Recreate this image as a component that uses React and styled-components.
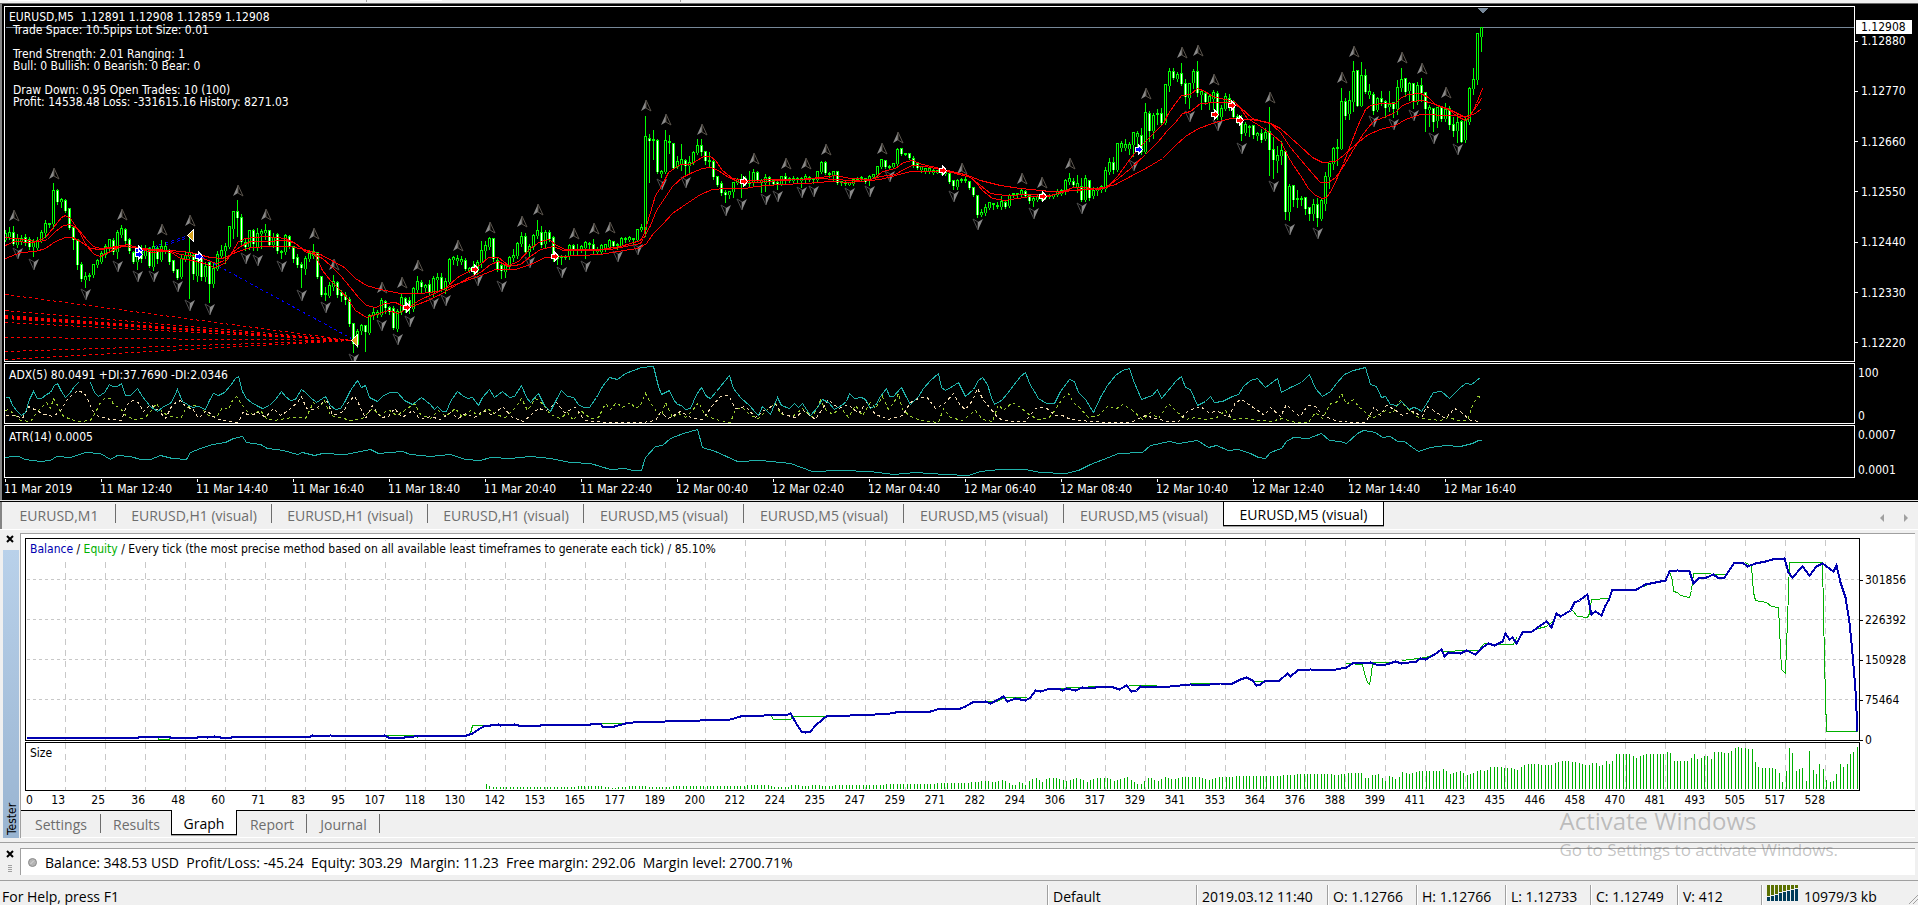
import React from "react";
import styled, { createGlobalStyle } from "styled-components";

const CHART_FONT = '"DejaVu Sans Condensed", "DejaVu Sans", "Noto Sans", sans-serif';
const UI_FONT = '"Open Sans", "Noto Sans", sans-serif';

const Global = createGlobalStyle`
  *, *::before, *::after { box-sizing: border-box; }
  body { margin: 0; background: #f0f0f0; overflow: hidden; }
`;

/* ---------- market data, in chart units ---------- */

/* high, body top, body bottom, low; a leading minus marks a falling bar */
const BARS = `
229 233 239 240,226 232 236 238,-225 232 243 244,233 238 244 246,234 238 240 243,-233 237 241 244,-236 239 246 248,238 241 246 255,236 240 247 248,229 232 240 241,
219 223 232 236,222 223 224 226,182 190 223 227,-188 190 201 203,197 199 201 206,-198 200 210 211,-207 208 227 228,-226 227 239 248,-238 239 264 268,-261 264 278 280,
271 276 279 286,272 275 276 279,263 264 274 276,258 260 264 266,250 253 261 262,243 246 254 256,238 239 246 250,-237 240 251 253,229 232 251 257,224 228 234 236,
-227 229 240 242,-237 239 250 252,-250 252 261 262,246 250 261 268,-244 250 258 261,244 248 255 257,-246 248 265 266,240 246 266 269,-245 248 258 262,239 246 259 260,
241 246 250 252,-248 250 261 263,-259 260 270 271,-268 269 277 278,253 258 276 277,250 255 258 260,233 252 256 297,-253 255 273 278,254 260 275 280,-256 258 276 279,
261 266 276 280,-261 262 283 301,262 268 283 286,250 254 268 269,244 250 255 256,242 246 250 262,225 226 246 247,210 211 228 237,-199 211 217 235,-213 217 241 243,
-238 242 246 249,229 230 246 248,-228 230 243 249,227 233 247 249,228 231 233 247,223 230 232 238,-229 230 244 245,232 237 244 246,-232 234 250 252,249 251 252 257,
233 235 251 253,-234 236 246 247,-245 246 258 261,-253 257 264 266,-261 264 267 286,255 258 268 273,250 253 258 260,243 251 255 257,-251 252 276 277,-275 276 294 295,
286 293 294 299,281 285 295 296,274 281 286 289,-280 282 294 296,-289 292 295 300,-291 295 299 303,-296 299 323 325,-322 323 343 351,328 331 344 346,323 325 330 333,
-324 325 331 350,313 315 332 333,306 312 315 318,309 312 314 316,297 300 314 315,-299 301 307 312,-305 307 311 313,-305 308 327 328,308 311 328 330,292 297 311 313,
-296 298 308 311,-296 300 306 312,286 288 308 310,275 281 289 291,-279 282 286 291,283 285 287 290,-279 284 292 293,275 278 292 295,272 277 279 289,-272 277 288 290,
277 281 289 292,257 259 281 282,255 257 259 263,254 258 260 264,255 259 261 263,-257 260 268 269,266 268 270 271,260 266 270 272,259 262 270 273,240 250 262 266,
240 245 250 257,236 238 246 248,-237 238 258 260,-257 260 268 270,-262 265 270 277,262 265 271 276,255 257 266 268,248 255 257 260,241 243 255 257,231 236 243 245,
-232 236 251 252,243 246 251 255,233 235 246 248,219 230 235 237,-225 232 244 246,229 232 243 246,-229 232 238 240,-235 237 255 260,253 255 258 263,254 256 257 263,
254 256 257 258,243 245 255 258,-243 245 250 253,243 249 250 254,244 246 250 251,240 242 247 257,241 243 244 248,-238 244 250 252,246 249 251 252,243 245 251 252,
243 244 248 250,238 240 246 248,-240 241 245 247,242 244 245 248,236 238 245 246,236 238 239 241,235 237 239 240,237 238 239 242,228 229 239 240,223 227 229 230,
115 136 229 235,-133 138 140 181,129 139 140 158,-138 140 171 172,169 171 173 176,129 140 171 172,134 141 142 152,-142 143 167 168,155 161 166 167,143 159 163 169,
-158 160 165 174,155 162 165 171,150 152 162 163,138 145 152 153,-138 145 151 154,-150 151 160 163,151 160 161 166,-158 161 176 178,-175 176 184 185,-180 183 192 194,
-189 192 194 201,191 191 194 197,181 182 191 196,177 179 182 183,173 179 181 196,-175 178 182 184,170 182 183 186,168 172 182 185,-170 172 180 181,178 180 182 191,
173 177 182 190,-175 177 181 184,-178 180 183 184,-180 182 184 188,175 176 183 184,-172 176 179 183,176 178 180 181,175 178 180 181,176 178 179 182,176 178 180 186,
173 176 178 181,175 177 179 180,177 178 179 182,170 171 179 180,160 162 171 172,-160 162 172 173,171 173 174 176,171 171 174 180,-171 171 182 183,180 181 182 184,
180 182 183 184,181 182 184 184,177 179 183 184,176 178 179 180,175 177 178 180,-177 178 181 182,174 176 180 184,173 174 176 177,165 166 174 175,158 159 166 167,
-159 160 166 167,164 166 167 168,162 163 166 167,147 149 163 164,-148 148 153 154,152 153 154 154,-152 153 157 158,-155 158 165 166,-161 163 167 168,165 166 169 171,
167 168 171 172,168 168 171 172,168 170 172 173,169 170 172 172,168 169 171 173,167 170 173 174,-172 173 181 182,-179 180 185 188,178 180 186 188,177 179 180 181,
176 179 180 181,-180 181 187 188,-186 187 194 195,-194 195 214 216,208 212 214 215,203 207 212 214,201 202 207 208,203 203 204 208,201 205 206 207,195 201 206 208,
-199 202 206 207,193 195 205 206,192 193 194 196,192 193 194 197,188 190 194 195,-189 191 195 196,-193 195 200 202,196 198 200 205,193 196 199 200,192 196 198 199,
193 195 197 198,193 195 196 197,193 194 196 197,188 191 194 195,188 190 193 194,178 180 191 193,172 178 181 183,-177 181 184 185,174 183 186 191,-177 186 199 200,
174 178 199 200,-179 180 197 199,186 190 195 197,186 188 190 194,184 186 189 191,166 170 188 190,157 162 171 173,-156 162 169 172,142 143 169 170,140 143 147 150,
138 144 147 149,141 144 148 153,131 132 144 155,130 133 136 145,-127 135 151 153,102 112 151 152,-110 113 130 140,112 115 130 137,108 113 114 123,-107 113 122 123,
83 84 122 123,67 71 85 90,-67 71 77 78,71 74 78 80,-62 73 83 84,-78 83 96 102,82 83 97 107,68 71 82 87,-60 71 92 95,90 91 94 108,
-91 93 101 103,94 96 101 108,89 92 98 108,-90 93 115 118,104 108 116 118,92 96 108 109,-93 98 103 109,-99 101 116 117,-113 116 121 122,-114 121 133 139,
121 124 132 134,124 126 127 135,-124 125 134 137,131 133 135 139,-128 133 139 141,127 132 138 139,-106 131 149 174,-136 149 159 177,145 155 160 171,140 150 155 163,
-150 151 211 218,183 186 211 219,-184 185 199 205,189 198 199 206,195 198 199 204,-197 197 208 213,-206 207 213 219,198 204 213 219,-197 204 217 225,197 200 218 219,
171 176 203 209,162 163 176 187,146 148 163 168,138 147 148 164,87 101 148 148,-97 101 115 118,90 100 113 118,60 71 101 110,-69 70 105 105,61 75 105 105,
-68 75 91 92,83 91 94 97,-91 94 110 113,96 98 109 110,-90 98 101 104,-99 101 107 116,90 104 106 110,-101 102 108 116,79 87 108 113,67 79 87 90,
-78 78 91 95,81 83 90 99,-82 83 101 107,81 85 101 103,-77 85 92 100,-92 92 108 130,104 107 109 125,-107 108 121 130,107 107 120 126,-106 107 118 120,
102 109 118 120,-105 108 124 128,-116 124 130 135,113 122 130 141,-119 121 141 141,117 119 139 141,86 88 121 123,67 79 88 93,33 33 79 83,27 27 36 50
`.trim().split(",").map((row) => {
  const text = row.trim();
  const down = text[0] === "-";
  const [high, top, bottom, low] = text.replace("-", "").split(" ").map(Number);
  return { down, high, top, bottom, low };
});

const AVERAGES = [
  "5,237 24,239 35,241 45,237 53,227 61,217 65,215 70,218 78,230 86,245 94,254 100,256 108,252 118,247 127,244 139,248 151,252 163,251 171,252 180,258 192,260 204,263 214,267 224,263 231,253 238,241 245,238 265,236 285,238 295,243 306,252 314,253 322,270 330,280 340,290 347,298 355,310 366,317 376,314 388,310 398,313 408,307 420,299 432,294 445,288 457,277 470,270 480,264 488,257 498,257 508,265 518,261 530,248 540,241 549,239 556,245 565,249 580,249 600,249 620,246 640,240 643,235 650,212 655,195 661,186 668,172 680,164 690,164 703,156 710,156 715,160 722,170 732,178 745,180 780,179 800,179 820,177 835,175 850,178 870,179 875,177 882,171 895,168 903,162 912,160 922,164 940,168 955,172 965,174 973,179 982,190 992,198 1005,200 1017,198 1030,196 1048,196 1060,192 1073,187 1085,187 1098,189 1107,187 1117,176 1130,158 1140,146 1152,134 1163,123 1168,113 1175,103 1181,95 1190,94 1197,88 1205,91 1212,96 1225,99 1234,101 1240,108 1247,118 1257,124 1269,132 1273,135 1281,142 1287,155 1293,165 1300,175 1308,188 1315,195 1322,198 1326,197 1331,190 1337,177 1343,163 1351,142 1358,124 1365,109 1370,105 1380,103 1395,103 1401,97 1408,94 1420,93 1428,97 1436,105 1448,109 1457,116 1465,120 1470,116 1476,103 1482,88",
  "5,245 14,241 30,242 40,241 47,239 55,231 63,225 70,224 78,229 86,239 93,246 100,248 110,247 122,245 127,244 140,248 152,250 168,250 180,254 195,256 205,259 216,263 224,260 232,252 240,246 250,241 265,241 285,240 293,242 305,250 312,253 322,258 330,265 340,275 350,287 358,297 366,305 375,307 385,303 395,302 403,306 412,306 425,301 440,294 455,285 467,278 480,272 490,264 498,261 508,266 520,264 530,256 540,249 553,246 563,250 590,250 610,249 640,243 643,238 650,225 656,210 664,198 672,186 682,177 692,172 702,168 710,167 718,170 728,177 740,182 755,182 780,180 820,178 850,180 870,179 880,176 895,174 905,168 912,165 925,166 940,169 955,173 970,177 980,185 990,193 1005,195 1030,194 1050,195 1065,191 1080,189 1105,187 1118,178 1130,168 1145,154 1158,141 1167,130 1175,122 1182,113 1190,111 1200,103 1215,102 1230,102 1240,107 1252,118 1262,121 1270,123 1280,132 1290,147 1300,159 1312,173 1320,182 1328,182 1335,177 1343,166 1353,149 1363,133 1373,121 1383,117 1395,112 1402,105 1412,101 1422,100 1432,103 1447,108 1465,117 1470,114 1476,106 1481,98",
  "5,258 20,252 35,251 45,248 55,241 65,237 72,237 80,241 90,248 100,249 125,246 140,248 170,250 190,252 210,257 222,258 235,252 250,247 270,246 290,246 308,250 320,254 333,261 344,267 355,278 366,285 380,289 400,293 420,293 437,291 455,284 475,277 495,269 515,269 530,264 545,257 560,256 600,254 630,249 638,248 646,243 653,233 662,224 672,213 685,204 700,194 712,189 725,188 745,188 755,186 780,184 805,183 830,181 850,182 880,179 895,175 910,171 925,171 945,171 965,174 980,180 1000,185 1020,188 1050,191 1075,190 1100,188 1115,184 1130,176 1147,167 1162,158 1175,145 1185,136 1198,128 1215,122 1230,118 1250,119 1268,122 1280,128 1290,137 1300,146 1312,157 1322,162 1335,161 1343,155 1355,144 1368,134 1380,129 1395,125 1405,119 1420,114 1450,115 1465,116 1475,113 1481,108",
];

const pairs = (s) => s.split(" ").map((p) => p.split(",").map(Number));

const TOPS = pairs(
  "13,215 53,173 121,214 161,229 189,220 237,190 265,214 313,233 333,264 381,287 401,282 417,265 457,245 489,227 521,221 537,209 573,233 593,228 609,227 645,105 665,119 701,129 753,158 785,163 805,163 825,149 881,148 897,137 961,168 1021,178 1041,182 1069,163 1145,93 1181,52 1197,50 1213,79 1269,97 1341,77 1353,51 1401,57 1421,68 1445,92"
);
const BOTTOMS = pairs(
  "17,252 33,263 85,293 117,265 137,275 153,275 177,285 189,304 209,308 245,257 257,259 281,265 301,294 325,306 353,358 381,324 397,338 409,320 433,302 445,299 477,279 501,285 529,261 561,271 585,265 617,255 637,248 661,183 685,181 725,209 741,203 765,198 777,195 801,191 813,190 849,192 869,190 889,175 953,195 977,223 1033,212 1081,207 1133,164 1189,115 1217,124 1241,147 1273,185 1289,228 1317,232 1373,120 1393,123 1413,114 1433,137 1457,148"
);
const BUYS = pairs("138,250 138,254 198,256 1138,149");
const SELLS = pairs("406,307 474,269 554,256 743,181 942,170 1042,196 1214,114 1231,105 1239,120");
const CLOSES = pairs("191,235 355,340");
const OPEN_LEVELS = [294, 310, 315, 316, 317, 318, 322, 337, 351, 359];

const ADX =
  "5,397 9,397 12,405 17,411 21,415 25,412 29,399 33,391 37,398 41,398 46,394 50,392 54,385 57,383 61,391 65,397 69,393 74,386 78,382 84,376 90,382 94,392 98,396 104,392 109,384 112,386 117,386 121,383 125,395 130,395 137,388 142,396 145,400 150,406 157,411 162,407 171,402 177,389 182,401 187,404 192,407 198,406 205,409 209,400 213,393 218,395 224,392 230,385 235,378 238,376 242,391 246,398 251,402 256,405 262,408 269,405 275,399 281,391 285,396 290,400 295,399 301,389 305,392 310,397 316,402 325,396 330,405 335,409 340,408 344,402 350,390 357,380 361,387 365,385 369,397 377,401 383,395 390,392 397,392 404,400 412,404 421,397 430,404 434,409 437,406 442,411 446,411 450,401 457,391 462,395 467,398 472,397 478,405 482,397 489,389 494,397 502,391 509,397 514,396 521,385 526,397 530,402 538,393 544,405 550,411 556,399 561,390 567,396 573,397 578,404 583,407 589,407 596,397 602,386 609,377 617,379 625,373 641,367 653,366 658,386 661,394 669,390 673,399 677,404 681,405 685,409 690,408 696,394 701,387 706,396 710,398 716,391 724,381 729,375 733,388 740,397 749,405 755,412 758,415 762,406 770,414 774,404 777,397 781,405 789,408 794,403 798,407 802,403 810,415 817,407 822,399 828,402 834,409 841,405 846,401 849,393 854,398 861,397 865,399 870,408 875,405 880,396 886,388 889,396 893,396 901,387 905,395 910,404 918,396 923,388 930,380 938,373 941,387 945,390 952,386 958,382 965,396 973,389 978,380 982,377 987,384 991,397 994,404 1001,400 1007,393 1013,385 1020,376 1025,372 1030,385 1034,391 1038,398 1046,403 1054,403 1060,391 1069,379 1074,381 1078,392 1085,399 1093,412 1100,397 1107,385 1115,375 1122,370 1129,368 1133,380 1141,399 1152,395 1157,389 1161,398 1167,391 1176,380 1181,376 1185,387 1190,389 1197,405 1205,401 1210,396 1214,402 1222,401 1232,396 1238,394 1243,386 1250,380 1257,378 1265,387 1277,378 1281,392 1290,387 1301,382 1309,374 1315,388 1322,396 1330,391 1336,383 1344,374 1353,370 1365,367 1370,384 1376,386 1381,397 1385,396 1390,404 1397,405 1401,401 1405,405 1409,409 1413,407 1417,408 1421,411 1425,405 1433,392 1441,391 1449,398 1459,388 1465,383 1471,384 1480,377";
const PLUS_DI =
  "5,410 8,409 14,414 20,420 30,421 38,410 46,402 50,408 53,398 57,405 62,415 70,419 80,421 90,420 96,410 100,402 104,398 110,398 113,404 120,408 126,416 135,419 145,417 150,411 156,403 162,412 170,416 180,418 185,409 190,405 198,405 208,415 216,417 222,407 228,409 232,400 236,396 240,402 246,410 252,414 260,410 266,418 274,420 285,418 293,417 300,417 305,418 313,402 318,408 324,400 330,415 340,417 350,420 362,418 372,408 380,415 388,409 396,415 404,410 414,403 420,414 430,418 438,410 445,416 455,408 462,417 470,410 478,415 487,408 495,414 505,417 515,407 521,398 527,410 535,398 543,404 550,414 560,418 567,412 573,420 580,410 590,418 598,417 605,403 610,409 616,402 622,407 630,402 635,408 640,405 645,393 650,402 658,414 661,415 665,402 672,417 678,413 685,417 692,410 698,402 705,415 715,419 730,422 735,409 742,407 750,415 758,418 768,408 775,403 780,413 792,416 802,408 812,417 820,400 825,409 832,414 840,407 848,417 855,405 862,415 870,402 875,408 882,396 888,409 894,401 898,393 902,409 910,416 920,420 938,422 943,408 950,417 962,420 975,410 982,419 992,421 998,404 1003,410 1012,402 1020,407 1030,415 1038,419 1048,418 1055,409 1062,398 1068,393 1073,402 1080,408 1088,417 1098,415 1108,405 1115,409 1122,404 1132,410 1142,419 1150,412 1158,418 1168,403 1175,410 1185,419 1195,417 1205,419 1215,418 1225,410 1232,419 1245,418 1260,420 1270,421 1282,418 1295,422 1308,422 1315,412 1322,418 1330,403 1336,402 1341,393 1346,404 1353,399 1358,406 1365,412 1372,418 1380,413 1385,410 1392,413 1400,400 1408,409 1418,417 1430,419 1440,420 1448,417 1458,420 1467,420 1472,405 1477,396 1481,397";
const MINUS_DI =
  "5,415 15,415 22,418 28,406 36,410 44,414 53,416 60,410 66,400 72,394 78,390 84,393 88,400 92,410 98,416 110,419 121,420 126,405 132,400 138,402 143,411 150,404 158,410 165,418 172,404 180,400 186,407 192,408 198,418 206,410 215,418 225,420 238,422 242,412 250,415 258,412 265,417 273,408 280,415 288,410 297,402 301,396 306,408 315,409 322,402 327,401 332,415 343,411 349,400 354,396 358,403 365,418 372,405 380,417 388,416 394,408 402,417 412,410 420,419 430,416 440,419 450,412 458,418 465,413 474,417 483,410 492,415 502,406 512,417 523,421 530,415 538,408 546,410 556,402 564,412 575,407 584,420 595,421 610,422 630,422 642,422 655,420 660,412 668,418 680,411 690,417 702,419 712,405 720,396 728,395 735,408 745,406 755,417 765,409 775,404 783,414 795,417 803,410 815,419 828,399 838,408 848,404 858,413 866,402 875,414 888,419 895,417 902,415 910,402 918,398 926,396 935,408 945,402 953,393 960,405 965,409 972,400 977,388 983,400 990,408 998,418 1010,421 1025,421 1035,408 1045,407 1055,415 1062,415 1070,419 1090,421 1110,422 1130,422 1145,415 1155,418 1168,421 1178,421 1188,410 1200,406 1208,412 1218,411 1228,417 1235,402 1241,399 1250,405 1260,412 1264,415 1270,407 1280,416 1286,404 1294,412 1300,416 1307,405 1315,406 1322,415 1335,420 1350,422 1365,422 1374,406 1380,415 1386,405 1394,409 1402,415 1412,411 1422,416 1426,406 1433,410 1445,418 1454,408 1461,412 1470,420 1481,421";
const ATR =
  "5,457 12,456 18,456 25,459 40,461 50,460 56,456 70,457 85,452 100,453 110,459 117,455 130,456 140,459 150,459 160,455 172,458 186,459 190,452 200,448 212,444 225,442 233,438 242,436 246,442 260,444 267,448 283,450 297,454 302,452 314,455 322,453 345,454 360,451 370,449 378,453 402,451 410,454 430,456 450,454 465,459 480,460 490,457 510,458 530,456 550,458 570,462 590,463 610,469 625,468 632,470 641,470 645,457 655,446 662,445 670,438 683,433 697,429 702,447 715,451 737,461 760,460 790,463 812,471 840,470 870,471 893,474 915,472 945,474 968,475 980,471 1000,469 1025,469 1040,472 1065,473 1078,470 1090,464 1108,457 1118,453 1142,452 1150,445 1169,441 1178,443 1197,440 1208,447 1216,445 1228,450 1238,449 1250,453 1258,457 1265,458 1270,452 1281,448 1286,441 1293,437 1308,438 1321,433 1329,440 1340,441 1346,443 1357,433 1363,430 1375,432 1382,437 1390,436 1397,441 1404,441 1412,447 1418,451 1430,447 1445,445 1460,446 1472,443 1478,440 1481,440";

const BALANCE =
  "26,737 138,737 139,736 168,736 170,737 197,737 198,736 205,736 207,737 214,736 220,737 231,737 232,736 310,736 312,735 318,736 330,735 345,736 384,735 388,737 404,737 414,736 417,735 466,735 472,733 478,729 483,726 490,725 498,724 500,725 514,724 518,725 540,725 541,724 590,724 594,723 600,723 602,726 614,726 625,723 640,721 665,721 700,720 730,719 740,716 788,714 790,713 793,718 797,725 801,731 805,732 810,731 815,725 822,719 826,716 850,715 875,714 890,713 900,711 930,711 940,708 960,708 965,706 972,702 985,701 990,703 996,700 1003,696 1007,701 1015,698 1025,700 1030,697 1035,690 1040,691 1050,688 1058,688 1062,690 1066,688 1075,690 1082,687 1090,688 1100,686 1110,686 1119,689 1126,685 1131,691 1136,690 1140,686 1152,687 1170,686 1190,684 1200,685 1220,683 1232,683 1240,679 1246,677 1252,680 1256,685 1260,684 1265,680 1279,680 1287,673 1290,676 1297,670 1310,669 1330,670 1346,667 1352,663 1370,662 1378,665 1386,664 1395,661 1401,663 1416,661 1420,658 1425,659 1434,654 1441,649 1444,656 1448,652 1460,653 1466,650 1475,654 1482,647 1488,643 1494,645 1502,641 1505,633 1509,639 1512,637 1516,643 1522,632 1532,631 1540,625 1546,621 1551,627 1556,613 1560,616 1570,610 1574,602 1579,600 1587,594 1591,614 1595,611 1601,615 1605,605 1608,600 1612,589 1636,589 1645,584 1665,580 1669,571 1677,570 1689,571 1693,583 1699,577 1706,577 1713,574 1717,577 1724,577 1734,562 1742,562 1747,566 1755,563 1765,561 1772,559 1784,558 1788,572 1792,577 1802,566 1809,575 1816,566 1822,563 1833,571 1836,565 1840,582 1845,597 1849,622 1852,653 1855,690 1857,731";
const EQUITY = [
  "157,736 158,739 169,739 170,737",
  "386,735 412,735 418,737",
  "470,733 472,725 490,725",
  "600,723 625,723",
  "771,716 773,719 790,719 792,716 826,716",
  "985,701 996,701 1005,697 1026,697",
  "1058,688 1075,687 1100,686",
  "1128,685 1156,685",
  "1190,683 1215,683",
  "1254,681 1263,681",
  "1346,663 1362,664 1364,673 1367,682 1369,684 1371,673 1372,662 1395,662",
  "1402,660 1425,657 1434,654",
  "1443,651 1466,650 1478,650 1484,643 1497,644 1513,644 1516,637",
  "1538,628 1546,626 1552,621 1557,613",
  "1572,610 1577,616 1587,617 1589,613 1591,599 1608,598",
  "1625,590 1632,590 1648,584",
  "1669,571 1672,580 1673,591 1677,592 1680,595 1689,597 1691,590 1693,573 1727,574",
  "1745,562 1751,566 1753,592 1755,600 1766,602 1771,606 1778,607 1781,669 1785,673 1787,620 1789,562 1822,562 1824,660 1826,731 1857,731",
];

/* lot size per trade, as trade offset and bar height */
const LOTS = pairs(
  "486,5 491,2 556,2 600,3 612,1 630,3 645,3 652,2 690,3 725,3 768,4 774,2 788,2 792,4 805,3 812,4 830,3 840,4 880,4 890,5 930,5 940,6 965,6 975,7 985,8 996,7 1003,9 1010,5 1014,3 1020,8 1024,3 1030,9 1036,11 1042,7 1048,11 1056,11 1065,8 1078,11 1086,7 1095,11 1107,11 1115,8 1128,12 1136,5 1140,4 1145,9 1150,12 1156,7 1165,12 1174,9 1180,12 1200,12 1208,9 1220,12 1232,12 1240,13 1262,13 1275,13 1288,14 1304,15 1330,15 1335,14 1352,16 1362,16 1366,9 1372,14 1380,15 1384,7 1390,14 1397,8 1402,17 1408,15 1420,18 1440,18 1444,20 1450,15 1460,18 1466,14 1474,16 1480,19 1486,18 1490,22 1512,21 1516,18 1526,25 1550,24 1562,28 1575,27 1584,24 1590,24 1594,28 1600,22 1606,28 1610,24 1615,35 1630,35 1635,31 1645,35 1665,35 1669,38 1673,28 1690,28 1693,37 1698,28 1706,35 1710,28 1714,37 1728,36 1737,42 1750,40 1752,40 1756,22 1778,20 1781,7 1785,6 1788,42 1792,36 1796,18 1803,22 1806,8 1809,38 1812,20 1816,15 1820,28 1823,20 1826,9 1829,6 1833,8 1836,15 1840,25 1843,22 1847,25 1850,35 1854,38 1857,42"
);
const lotAt = (x) => {
  let i = 0;
  while (i < LOTS.length - 2 && LOTS[i + 1][0] < x) i += 1;
  const [x0, h0] = LOTS[i];
  const [x1, h1] = LOTS[i + 1];
  return Math.round(h0 + ((h1 - h0) * (x - x0)) / (x1 - x0));
};
const LOT_BARS = Array.from({ length: 405 }, (_, i) => Math.round(486 + i * 3.393)).map((x) => [x, lotAt(x)]);

const PRICES = ["1.12880", "1.12770", "1.12660", "1.12550", "1.12440", "1.12330", "1.12220"];
const TIMES = [
  "11 Mar 2019", "11 Mar 12:40", "11 Mar 14:40", "11 Mar 16:40", "11 Mar 18:40", "11 Mar 20:40", "11 Mar 22:40",
  "12 Mar 00:40", "12 Mar 02:40", "12 Mar 04:40", "12 Mar 06:40", "12 Mar 08:40", "12 Mar 10:40", "12 Mar 12:40",
  "12 Mar 14:40", "12 Mar 16:40",
];
const SYMBOLS = [
  ["EURUSD,M1", 114], ["EURUSD,H1 (visual)", 156], ["EURUSD,H1 (visual)", 156], ["EURUSD,H1 (visual)", 156],
  ["EURUSD,M5 (visual)", 160], ["EURUSD,M5 (visual)", 160], ["EURUSD,M5 (visual)", 160], ["EURUSD,M5 (visual)", 160],
  ["EURUSD,M5 (visual)", 161],
];
const TRADE_TICKS = [
  13, 25, 36, 48, 60, 71, 83, 95, 107, 118, 130, 142, 153, 165, 177, 189, 200, 212, 224, 235, 247, 259, 271, 282,
  294, 306, 317, 329, 341, 353, 364, 376, 388, 399, 411, 423, 435, 446, 458, 470, 481, 493, 505, 517, 528,
];
const BALANCES = ["301856", "226392", "150928", "75464", "0"];
const TESTER_TABS = [["Settings", 80], ["Results", 71], ["Graph", 66], ["Report", 70], ["Journal", 73]];
const QUOTES = [
  ["Default", 149], ["2019.03.12 11:40", 131], ["O: 1.12766", 89], ["H: 1.12766", 89], ["L: 1.12733", 85],
  ["C: 1.12749", 87], ["V: 412", 84],
];

/* ---------- styled parts ---------- */

const Page = styled.div`
  position: relative;
  display: flex;
  flex-direction: column;
  height: 100vh;
  min-height: 600px;
  overflow: hidden;
  background: #f0f0f0;
  font-family: ${UI_FONT};
  font-size: 14px;
  color: #000;
`;

const ToolbarEdge = styled.div`
  display: flex;
  flex: none;
  height: 4px;
  padding-left: 8px;
  border-bottom: 1px solid #6a6a6a;
`;
const ToolbarCell = styled.span`
  width: ${(p) => p.$w}px;
  height: ${(p) => (p.$sep ? 2 : 1)}px;
  background: ${(p) => (p.$lit ? "#fff" : "transparent")};
  border-right: ${(p) => (p.$sep ? "1px solid #a0a0a0" : 0)};
`;

const ChartWindow = styled.section`
  flex: none;
  display: flex;
  flex-direction: column;
  gap: 1px;
  padding: 2px 0 0 2px;
  background: #000;
  border-left: 2px solid #848484;
  font-family: ${CHART_FONT};
  font-size: 12px;
  color: #fff;
`;
const PlotRow = styled.div`
  display: grid;
  grid-template-columns: minmax(0, 1fr) 63px;
  height: ${(p) => p.$h}px;
`;
const Plot = styled.div`
  position: relative;
  overflow: hidden;
  border: 1px solid #fff;
`;
const PlotSvg = styled.svg`
  display: block;
  width: 100%;
  height: 100%;
`;
const PlotTitle = styled.h2`
  position: absolute;
  top: ${(p) => (p.$solid ? 4 : 3)}px;
  left: 4px;
  margin: 0;
  font-size: 12px;
  font-weight: 400;
  line-height: 14px;
  white-space: pre;
  background: ${(p) => (p.$solid ? "#000" : "transparent")};
`;
const Comment = styled.pre`
  position: absolute;
  top: 17px;
  left: 8px;
  margin: 0;
  font: inherit;
  line-height: 12px;
`;
const PriceAxis = styled.div`
  position: relative;
  display: flex;
  flex-direction: column;
  justify-content: space-between;
  padding: 27px 0 11px;
`;
const AxisMark = styled.span`
  display: flex;
  align-items: center;
  gap: ${(p) => (p.$line ? 2 : 3)}px;
  line-height: 16px;
  &::before {
    content: "";
    width: 3px;
    height: 1px;
    background: ${(p) => p.$line || "#fff"};
  }
`;
const PriceTag = styled.output`
  position: absolute;
  top: 14px;
  left: 1px;
  width: 56px;
  padding-left: 5px;
  background: #fff;
  color: #000;
  line-height: 14px;
`;
const RangeAxis = styled.div`
  display: flex;
  flex-direction: column;
  justify-content: space-between;
  padding: 3px 0 1px 3px;
  line-height: 14px;
`;
const TimeAxis = styled.div`
  display: flex;
  height: 22px;
  overflow: hidden;
`;
const TimeMark = styled.span`
  flex: none;
  width: 96px;
  white-space: nowrap;
  line-height: 15px;
  &::before {
    content: "";
    display: block;
    width: 1px;
    height: 3px;
    margin-left: 1px;
    background: #fff;
  }
`;

const SymbolBar = styled.nav`
  flex: none;
  display: flex;
  height: 28px;
  padding-left: 2px;
  border-top: 1px solid #000;
  outline: 1px solid #e4e4e4;
  box-shadow: inset 2px 0 #848484;
`;
const SymbolTab = styled.button`
  position: relative;
  width: ${(p) => p.$w}px;
  height: 24px;
  margin: 0;
  padding: 3px 0 0;
  border: 0;
  background: transparent;
  font: inherit;
  line-height: 20px;
  color: #6d6d6d;
  white-space: nowrap;
  &::after {
    content: "";
    position: absolute;
    top: 2px;
    right: 0;
    width: 1px;
    height: 19px;
    background: #6d6d6d;
  }
  ${(p) =>
    p.$active &&
    `
    background: #fff; color: #000; border: 1px solid #000; border-top: 0; margin-left: -1px;
    box-shadow: 0 1px #a0a0a0;
    &::after { display: none; }
  `}
`;
const Scrollers = styled.div`
  display: flex;
  gap: 16px;
  margin: 4px 8px 0 auto;
`;
const IconButton = styled.button`
  display: block;
  margin: 0;
  padding: 0;
  border: 0;
  background: none;
  line-height: 0;
`;

const Dock = styled.section`
  flex: none;
  display: grid;
  grid-template-columns: 20px minmax(0, 1fr);
  padding: ${(p) => (p.$tall ? "3px 3px 0 0" : "5px 3px 0 0")};
  border-top: 1px solid ${(p) => (p.$tall ? "#fff" : "#a0a0a0")};
`;
const DockHandle = styled.div`
  display: flex;
  flex-direction: column;
  align-items: center;
  gap: 7px;
  padding-top: 2px;
`;
const DockTitle = styled.h2`
  flex: 1;
  width: 16px;
  margin: 0 0 0 2px;
  padding: 3px 0 0;
  writing-mode: vertical-rl;
  transform: rotate(180deg);
  background: linear-gradient(#99b4d1, #b9d1ea);
  font: 400 12px/18px ${CHART_FONT};
`;
const TesterBody = styled.div`
  border: solid #a0a0a0;
  border-width: 1px 0 0 1px;
  background: #fff;
  font-family: ${CHART_FONT};
  font-size: 12px;
`;
const GraphGrid = styled.div`
  display: grid;
  grid-template-columns: minmax(0, 1fr) 55px;
  row-gap: 1px;
  padding: 4px 0 0 4px;
`;
const GraphFrame = styled.div`
  position: relative;
  height: ${(p) => p.$h}px;
  border: 1px solid #000;
`;
const GraphCaption = styled.p`
  position: absolute;
  top: 2px;
  left: 0;
  margin: 0;
  padding: 0 3px 0 4px;
  line-height: 16px;
  white-space: nowrap;
  background: #fff;
`;
const Ink = styled.span`
  color: ${(p) => p.$c};
`;
const BalanceAxis = styled.div`
  display: flex;
  flex-direction: column;
  justify-content: space-between;
  height: 176px;
  margin: 34px 0 -8px;
  white-space: nowrap;
`;
const TradeAxis = styled.div`
  display: flex;
  justify-content: space-between;
  height: 18px;
  margin-right: 35px;
  line-height: 16px;
`;
const TradeMark = styled.span`
  flex: 1 1 0;
  text-align: right;
  &:first-child {
    flex: none;
    width: 0;
    text-indent: 1px;
    text-align: left;
  }
`;
const TesterTabs = styled.nav`
  display: flex;
  height: 28px;
  border-top: 1px solid #000;
  border-bottom: 1px solid #fff;
  background: #f0f0f0;
  font-family: ${UI_FONT};
  font-size: 14px;
`;
const TesterTab = styled(SymbolTab)`
  &::after {
    top: 3px;
  }
  ${(p) => p.$active && "margin-top: -1px; height: 25px;"}
`;
const Gap = styled.div`
  flex: none;
  height: 4px;
`;
const AccountLine = styled.div`
  display: flex;
  align-items: center;
  gap: 7px;
  height: 27px;
  padding-left: 6px;
  border: 1px solid #a0a0a0;
  border-width: 1px 0 0 1px;
  background: #fff;
  white-space: pre;
`;
const GripBars = styled.span`
  width: 4px;
  height: 8px;
  background: repeating-linear-gradient(#a0a0a0 0 1px, #f0f0f0 1px 2px);
`;
const StatusBar = styled.footer`
  flex: none;
  display: flex;
  height: 25px;
  margin-top: 5px;
  padding-top: 4px;
  border-top: 1px solid #a0a0a0;
  line-height: 24px;
`;
const StatusHelp = styled.span`
  flex: 1;
  padding-left: 2px;
`;
const StatusCell = styled.span`
  display: flex;
  gap: 6px;
  width: ${(p) => p.$w}px;
  padding-left: 5px;
  border-left: 1px solid #a0a0a0;
  box-shadow: inset 1px 0 #fff;
  white-space: nowrap;
`;
const Grip = styled.svg`
  margin-left: auto;
  margin-top: 6px;
`;
const Watermark = styled.aside`
  position: absolute;
  top: 804px;
  right: 80px;
  color: rgba(90, 90, 90, 0.36);
  font-size: 17px;
  line-height: 24px;
  pointer-events: none;
`;
const WatermarkTitle = styled.p`
  margin: 0;
  font-size: 24px;
  line-height: 34px;
`;

/* ---------- drawings ---------- */

const Fractal = ({ x, y, down }) => (
  <g transform={`translate(${x + 0.5} ${y + 0.5}) scale(1 ${down ? -1 : 1})`} shapeRendering="auto">
    <path d="M0-6L-5 5L0 2Z" fill={down ? "none" : "#8a8a8a"} stroke={down ? "#4c4c4c" : "none"} />
    <path d="M0-6L5 5L0 2Z" fill={down ? "#8a8a8a" : "none"} stroke={down ? "none" : "#5a544c"} />
  </g>
);

const TradeArrow = ({ x, y, color }) => (
  <path
    transform={`translate(${x} ${y})`}
    d="M-3-2H0V-5L4 0L0 5V2H-3Z"
    fill={color}
    stroke="#fff"
  />
);

const PriceDrawing = () => (
  <PlotSvg aria-label="Price chart" shapeRendering="crispEdges">
    <g transform="translate(-4.5 -6.5)" fill="none">
      <path d="M5 27H2600" stroke="#778899" />
      <path d="M1476 7H1488L1482 13Z" fill="#778899" />
      <g stroke="#f00" strokeDasharray="3 3">
        {OPEN_LEVELS.map((y) => (
          <path key={y} d={`M5 ${y}L351 340`} />
        ))}
      </g>
      <path d="M142 250L188 235M142 252L188 237M202 257L351 338" stroke="#00f" strokeDasharray="3 3" />
      {TOPS.map(([x, y]) => (
        <Fractal key={`t${x}`} x={x} y={y} />
      ))}
      {BOTTOMS.map(([x, y]) => (
        <Fractal key={`b${x}`} x={x} y={y} down />
      ))}
      {BARS.map((bar, i) => {
        const x = 5 + i * 4;
        return (
          <g key={x} stroke="#0f0">
            <path d={`M${x} ${bar.high}V${bar.low + 1}`} />
            <rect
              x={x - 1}
              y={bar.top}
              width="2"
              height={Math.max(bar.bottom - bar.top, 1)}
              fill={bar.down ? "#fff" : "#000"}
            />
            {bar.bottom - bar.top > 1 && (
              <path d={`M${x} ${bar.top + 1}V${bar.bottom}`} stroke={bar.down ? "#fff" : "#000"} />
            )}
          </g>
        );
      })}
      {AVERAGES.map((points) => (
        <polyline key={points.slice(0, 12)} points={points} stroke="#f00" />
      ))}
      {BUYS.map(([x, y]) => (
        <TradeArrow key={`${x}-${y}`} x={x} y={y} color="#00f" />
      ))}
      {SELLS.map(([x, y]) => (
        <TradeArrow key={x} x={x} y={y} color="#f00" />
      ))}
      {CLOSES.map(([x, y]) => (
        <path key={x} transform={`translate(${x} ${y})`} d="M2-6V6L-4 0Z" fill="#daa520" stroke="#fff" />
      ))}
    </g>
  </PlotSvg>
);

const AdxDrawing = () => (
  <PlotSvg aria-label="ADX" shapeRendering="crispEdges">
    <g transform="translate(-4.5 -363.5)" fill="none">
      <polyline points={PLUS_DI} stroke="#9acd32" strokeDasharray="3 3" />
      <polyline points={MINUS_DI} stroke="#f5deb3" strokeDasharray="3 3" />
      <polyline points={ADX} stroke="#20b2aa" />
    </g>
  </PlotSvg>
);

const AtrDrawing = () => (
  <PlotSvg aria-label="ATR" shapeRendering="crispEdges">
    <g transform="translate(-4.5 -425.5)" fill="none">
      <polyline points={ATR} stroke="#20b2aa" />
    </g>
  </PlotSvg>
);

const gridColumns = (top, bottom) => TRADE_TICKS.map((_, i) => `M${65 + i * 40} ${top}V${bottom}`).join("");

const BalanceDrawing = () => (
  <PlotSvg aria-label="Balance and equity" viewBox="26 539 1833 201" preserveAspectRatio="none" shapeRendering="crispEdges">
    <g transform="translate(.5 .5)" fill="none">
      <path d={gridColumns(539, 740)} stroke="#c8c8c8" strokeDasharray="6 5" />
      <path d="M26 579H1859M26 619H1859M26 659H1859M26 699H1859" stroke="#c8c8c8" strokeDasharray="3 3" />
      {EQUITY.map((points) => (
        <polyline key={points.slice(0, 8)} points={points} stroke="#00b000" />
      ))}
      <polyline points={BALANCE} stroke="#0000b0" strokeWidth="2" />
    </g>
  </PlotSvg>
);

const SizeDrawing = () => (
  <PlotSvg aria-label="Size" viewBox="26 743 1833 47" preserveAspectRatio="none" shapeRendering="crispEdges">
    <g transform="translate(.5 0)" fill="none">
      <path d={gridColumns(743, 790)} stroke="#c8c8c8" strokeDasharray="6 5" />
      <path d={LOT_BARS.map(([x, h]) => `M${x} 789V${789 - h}`).join("")} stroke="#00b000" />
    </g>
  </PlotSvg>
);

const CloseIcon = () => (
  <svg width="8" height="8" viewBox="0 0 8 8" aria-hidden="true">
    <path d="M1 1L7 7M7 1L1 7" stroke="#000" strokeWidth="2" />
  </svg>
);

const Arrow = ({ flip }) => (
  <svg width="8" height="12" viewBox="0 0 8 12" aria-hidden="true">
    <path d={flip ? "M2 2V10L6 6Z" : "M6 2V10L2 6Z"} fill="#a0a0a0" />
  </svg>
);

const Bullet = () => (
  <svg width="11" height="11" viewBox="0 0 11 11" aria-hidden="true">
    <circle cx="5.5" cy="5.5" r="4" fill="#b4b4b4" stroke="#8c8c8c" />
    <path d="M3.5 7L7 3.5" stroke="#dcdcdc" />
  </svg>
);

const TrafficIcon = () => (
  <svg width="31" height="17" viewBox="0 0 31 17" aria-hidden="true" shapeRendering="crispEdges">
    {[0, 1, 2, 3, 4, 5, 6, 7].map((i) => (
      <g key={i}>
        <rect x={i * 4} y="0" width="3" height={Math.max(11 - Math.round(i * 1.2), 3)} fill="#5a7000" />
        <rect x={i * 4} y={12 - Math.round(i * 1.2)} width="3" height={4 + Math.round(i * 1.2)} fill="#003c5a" />
      </g>
    ))}
  </svg>
);

/* ---------- page ---------- */

export default function App() {
  return (
    <Page>
      <Global />
      <ToolbarEdge>
        <ToolbarCell $w={32} $lit />
        <ToolbarCell $w={327} $sep />
        <ToolbarCell $w={43} />
        <ToolbarCell $w={32} $lit />
        <ToolbarCell $w={239} $sep />
      </ToolbarEdge>

      <ChartWindow>
        <PlotRow $h={356}>
          <Plot>
            <PriceDrawing />
            <PlotTitle>EURUSD,M5  1.12891 1.12908 1.12859 1.12908</PlotTitle>
            <Comment>{`Trade Space: 10.5pips Lot Size: 0.01

Trend Strength: 2.01 Ranging: 1
Bull: 0 Bullish: 0 Bearish: 0 Bear: 0

Draw Down: 0.95 Open Trades: 10 (100)
Profit: 14538.48 Loss: -331615.16 History: 8271.03`}</Comment>
          </Plot>
          <PriceAxis>
            {PRICES.map((price) => (
              <AxisMark key={price}>{price}</AxisMark>
            ))}
            <PriceTag>1.12908</PriceTag>
          </PriceAxis>
        </PlotRow>
        <PlotRow $h={61}>
          <Plot>
            <AdxDrawing />
            <PlotTitle $solid>ADX(5) 80.0491 +DI:37.7690 -DI:2.0346</PlotTitle>
          </Plot>
          <RangeAxis>
            <span>100</span>
            <span>0</span>
          </RangeAxis>
        </PlotRow>
        <PlotRow $h={53}>
          <Plot>
            <AtrDrawing />
            <PlotTitle $solid>ATR(14) 0.0005</PlotTitle>
          </Plot>
          <RangeAxis>
            <span>0.0007</span>
            <span>0.0001</span>
          </RangeAxis>
        </PlotRow>
        <TimeAxis>
          {TIMES.map((time) => (
            <TimeMark key={time}>{time}</TimeMark>
          ))}
        </TimeAxis>
      </ChartWindow>

      <SymbolBar aria-label="Charts">
        {SYMBOLS.map(([name, width], i) => (
          <SymbolTab key={i} $w={width} $active={i === 8}>
            {name}
          </SymbolTab>
        ))}
        <Scrollers>
          <IconButton aria-label="Scroll left">
            <Arrow />
          </IconButton>
          <IconButton aria-label="Scroll right">
            <Arrow flip />
          </IconButton>
        </Scrollers>
      </SymbolBar>

      <Dock $tall>
        <DockHandle>
          <IconButton aria-label="Close tester">
            <CloseIcon />
          </IconButton>
          <DockTitle>Tester</DockTitle>
        </DockHandle>
        <TesterBody>
          <GraphGrid>
            <GraphFrame $h={203}>
              <BalanceDrawing />
              <GraphCaption>
                <Ink $c="#0000b0">Balance</Ink> / <Ink $c="#00b000">Equity</Ink> / Every tick (the most precise method
                based on all available least timeframes to generate each tick) / 85.10%
              </GraphCaption>
            </GraphFrame>
            <BalanceAxis>
              {BALANCES.map((value) => (
                <AxisMark key={value} $line="#000">
                  {value}
                </AxisMark>
              ))}
            </BalanceAxis>
            <GraphFrame $h={49}>
              <SizeDrawing />
              <GraphCaption>Size</GraphCaption>
            </GraphFrame>
            <span />
            <TradeAxis>
              <TradeMark>0</TradeMark>
              {TRADE_TICKS.map((tick) => (
                <TradeMark key={tick}>{tick}</TradeMark>
              ))}
            </TradeAxis>
          </GraphGrid>
          <TesterTabs aria-label="Tester pages">
            {TESTER_TABS.map(([name, width]) => (
              <TesterTab key={name} $w={width} $active={name === "Graph"}>
                {name}
              </TesterTab>
            ))}
          </TesterTabs>
        </TesterBody>
      </Dock>
      <Gap />

      <Dock>
        <DockHandle>
          <IconButton aria-label="Close terminal">
            <CloseIcon />
          </IconButton>
          <GripBars />
        </DockHandle>
        <AccountLine>
          <Bullet />
          <span>
            {"Balance: 348.53 USD  Profit/Loss: -45.24  Equity: 303.29  Margin: 11.23  Free margin: 292.06  Margin level: 2700.71%"}
          </span>
        </AccountLine>
      </Dock>

      <StatusBar>
        <StatusHelp>For Help, press F1</StatusHelp>
        {QUOTES.map(([text, width]) => (
          <StatusCell key={text} $w={width}>
            {text}
          </StatusCell>
        ))}
        <StatusCell $w={157}>
          <TrafficIcon />
          10979/3 kb
          <Grip width="9" height="14" viewBox="0 0 9 14" aria-hidden="true">
            <path d="M0 13L9 4M4 13L9 8" stroke="#a0a0a0" />
          </Grip>
        </StatusCell>
      </StatusBar>

      <Watermark>
        <WatermarkTitle>Activate Windows</WatermarkTitle>
        Go to Settings to activate Windows.
      </Watermark>
    </Page>
  );
}
